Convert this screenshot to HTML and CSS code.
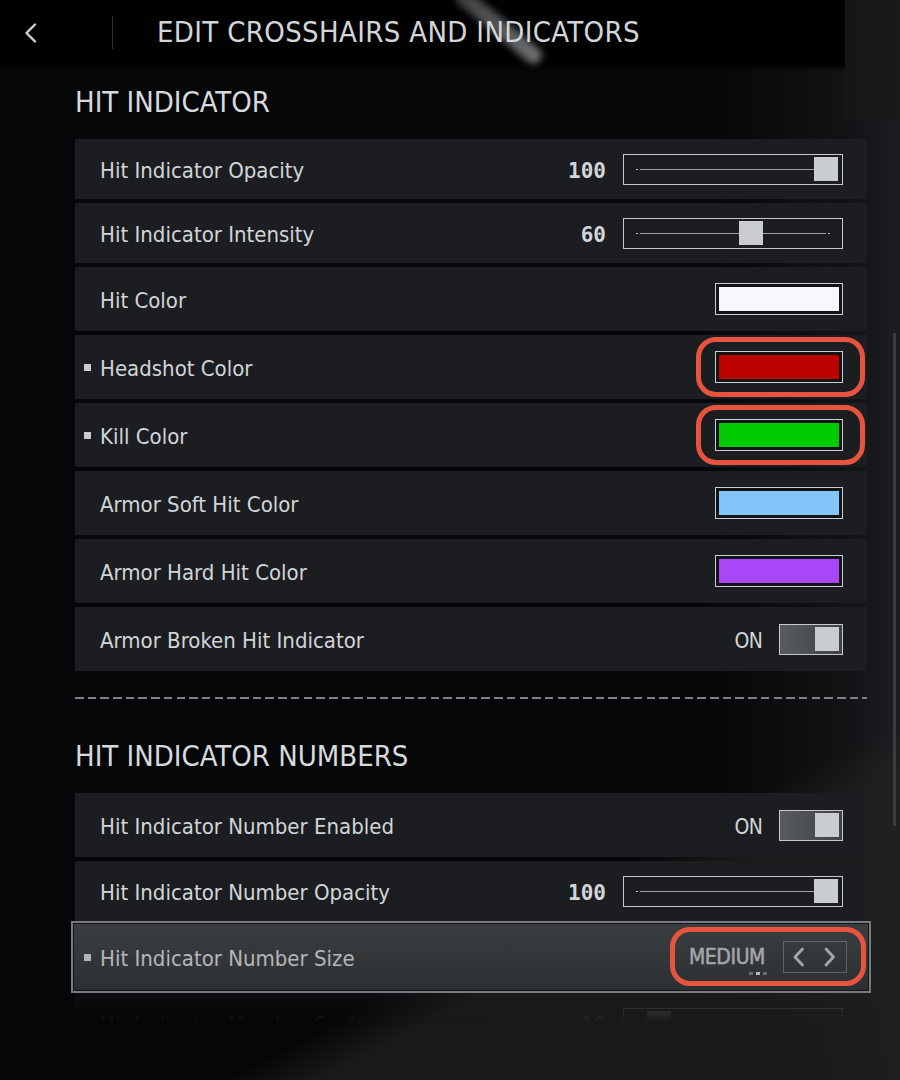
FILE: index.html
```html
<!DOCTYPE html>
<html lang="en">
<head>
<meta charset="utf-8">
<title>Edit Crosshairs and Indicators</title>
<link rel="stylesheet" href="styles.css">
</head>
<body>
<div class="scene"><div class="streak"></div><div class="rubble"></div></div>

<header class="topbar">
  <svg class="back" width="14" height="20" viewBox="0 0 14 20"><polyline points="11,1.5 2.5,10 11,18.5" fill="none" stroke="#cfd2d5" stroke-width="2.4" stroke-linecap="round" stroke-linejoin="round"/></svg>
  <span class="vsep"></span>
  <h1 class="title">EDIT CROSSHAIRS AND INDICATORS</h1>
</header>

<main class="content">
  <h2 class="section-title">HIT INDICATOR</h2>
  <div class="list">
    <div class="row short">
      <span class="mark"></span><span class="label">Hit Indicator Opacity</span>
      <div class="ctrl"><span class="value">100</span><div class="slider"><span class="track"></span><span class="thumb" style="left:190px"></span></div></div>
    </div>
    <div class="row short">
      <span class="mark"></span><span class="label">Hit Indicator Intensity</span>
      <div class="ctrl"><span class="value">60</span><div class="slider"><span class="track"></span><span class="thumb" style="left:115px"></span></div></div>
    </div>
    <div class="row">
      <span class="mark"></span><span class="label">Hit Color</span>
      <div class="ctrl"><div class="swatch"><span class="fill c-white"></span></div></div>
    </div>
    <div class="row">
      <span class="mark on"></span><span class="label">Headshot Color</span>
      <div class="ctrl"><div class="swatch"><span class="fill c-red"></span><span class="ring"></span></div></div>
    </div>
    <div class="row">
      <span class="mark on"></span><span class="label">Kill Color</span>
      <div class="ctrl"><div class="swatch"><span class="fill c-green"></span><span class="ring"></span></div></div>
    </div>
    <div class="row">
      <span class="mark"></span><span class="label">Armor Soft Hit Color</span>
      <div class="ctrl"><div class="swatch"><span class="fill c-blue"></span></div></div>
    </div>
    <div class="row">
      <span class="mark"></span><span class="label">Armor Hard Hit Color</span>
      <div class="ctrl"><div class="swatch"><span class="fill c-purple"></span></div></div>
    </div>
    <div class="row">
      <span class="mark"></span><span class="label">Armor Broken Hit Indicator</span>
      <div class="ctrl"><span class="state">ON</span><div class="toggle"><span class="knob"></span></div></div>
    </div>
  </div>

  <div class="dashes"></div>

  <h2 class="section-title second">HIT INDICATOR NUMBERS</h2>
  <div class="list">
    <div class="row">
      <span class="mark"></span><span class="label">Hit Indicator Number Enabled</span>
      <div class="ctrl"><span class="state">ON</span><div class="toggle"><span class="knob"></span></div></div>
    </div>
    <div class="row short">
      <span class="mark"></span><span class="label">Hit Indicator Number Opacity</span>
      <div class="ctrl"><span class="value">100</span><div class="slider"><span class="track"></span><span class="thumb" style="left:190px"></span></div></div>
    </div>
    <div class="row selected">
      <span class="mark on"></span><span class="label">Hit Indicator Number Size</span>
      <div class="cycle">
        <span class="cycle-value">MEDIUM<span class="dots"><i></i><i class="cur"></i><i></i></span></span>
        <div class="arrows"><svg width="62" height="30" viewBox="0 0 62 30"><polyline points="18.5,7 11,15 18.5,23" fill="none" stroke="#a3a7ab" stroke-width="2.8" stroke-linecap="round" stroke-linejoin="round"/><polyline points="42,7 49.5,15 42,23" fill="none" stroke="#a3a7ab" stroke-width="2.8" stroke-linecap="round" stroke-linejoin="round"/></svg></div>
        <span class="ring ring-cycle"></span>
      </div>
    </div>
    <div class="row short faded">
      <span class="mark"></span><span class="label">Hit Indicator Number Scale</span>
      <div class="ctrl"><span class="value">10</span><div class="slider"><span class="track"></span><span class="thumb" style="left:23px"></span></div></div>
    </div>
  </div>
</main>

<div class="scrollbar"></div>
</body>
</html>
```

FILE: styles.css
```css
* { box-sizing: border-box; margin: 0; padding: 0; }

html, body { width: 900px; height: 1080px; }

body {
  position: relative;
  overflow: hidden;
  background: #060708;
  color: #d4d7da;
  font-family: "DejaVu Sans Condensed", "DejaVu Sans", sans-serif;
  font-stretch: semi-condensed;
}

/* background scene */
.scene {
  position: absolute;
  inset: 0;
  z-index: -1;
  overflow: hidden;
  background:
    linear-gradient(90deg, rgba(0,0,0,0) 0, rgba(0,0,0,0) 700px, rgba(28,30,33,.55) 850px, rgba(30,32,35,.9) 900px),
    #050607;
}
.scene::before {
  content: "";
  position: absolute;
  left: 0; top: 0; width: 900px; height: 120px;
  background:
    linear-gradient(180deg, #010102 0, #010102 64px, rgba(1,1,2,0) 72px),
    linear-gradient(90deg, rgba(0,0,0,0) 0, rgba(0,0,0,0) 840px, #141618 848px, #17191b 900px);
  background-repeat: no-repeat;
  background-size: 845px 120px, 900px 120px;
}
.streak {
  position: absolute;
  left: 490px; top: -28px;
  width: 17px; height: 108px;
  border-radius: 9px;
  background: linear-gradient(180deg, #4a4c4e, #8a8c8e);
  transform: rotate(-50deg);
  filter: blur(3.5px);
  opacity: .8;
}
.rubble {
  position: absolute;
  left: 0; top: 700px; width: 900px; height: 380px;
  background: linear-gradient(152deg, rgba(0,0,0,0) 0, rgba(0,0,0,0) 58%, rgba(36,35,34,.65) 64%, rgba(30,30,30,.8) 100%);
}

/* header */
.topbar {
  height: 65px;
  display: flex;
  align-items: center;
  padding-left: 24px;
}
.back { display: block; margin-right: 74px; }
.vsep { width: 1px; height: 33px; background: #2e3032; }
.title {
  margin-left: 44px;
  font-size: 29px;
  line-height: 29px;
  font-weight: normal;
  letter-spacing: .35px;
  color: #d3d6d9;
}

/* content */
.content { margin-left: 75px; width: 792px; }

.section-title {
  margin-top: 23px;
  margin-bottom: 22px;
  font-size: 29px;
  line-height: 29px;
  height: 29px;
  font-weight: normal;
  color: #d7dadd;
}
.section-title.second { margin-top: 43px; margin-bottom: 22px; }

.list { display: flex; flex-direction: column; gap: 4px; }

.row {
  position: relative;
  height: 64px;
  display: flex;
  align-items: center;
  padding: 0 24px 0 9px;
  background: #1b1d20;
}
.row.short { height: 60px; }

.mark { flex: none; width: 16px; display: flex; align-items: center; }
.mark.on::before {
  content: "";
  width: 7px; height: 7px;
  background: #c9cdd1;
}

.label { flex: 1; font-size: 22px; line-height: 26px; padding-top: 4px; color: #d2d5d8; }

.ctrl { display: flex; align-items: center; gap: 17px; }

.value {
  font-family: "DejaVu Sans Mono", monospace;
  font-weight: bold;
  font-size: 21px;
  line-height: 26px;
  padding-top: 4px;
  color: #d2d6da;
}

.slider {
  position: relative;
  width: 220px;
  height: 31px;
  border: 1px solid #c6cacd;
}
.track {
  position: absolute;
  left: 12px; right: 12px; top: 14px;
  height: 1px;
  background: linear-gradient(90deg, #b9bdc1 0 2px, transparent 2px 4px, #9da1a5 4px calc(100% - 4px), transparent calc(100% - 4px) calc(100% - 2px), #b9bdc1 calc(100% - 2px));
}
.thumb {
  position: absolute;
  top: 2.5px;
  width: 24px; height: 24px;
  background: #c9cdd2;
}

.swatch {
  position: relative;
  width: 128px; height: 32px;
  border: 1px solid #c8cfd5;
  padding: 3px;
  background: #121416;
}
.fill { display: block; height: 100%; }
.c-white { background: #f6f8fb; }
.c-red { background: #bb0000; }
.c-green { background: #00cb00; }
.c-blue { background: #83c5f8; }
.c-purple { background: #a846f8; }

.ring {
  position: absolute;
  left: -20px; right: -23px; top: -15px; bottom: -15px;
  border: 5px solid #e6533f;
  border-radius: 20px;
  pointer-events: none;
}

.state { font-size: 21px; line-height: 26px; padding-top: 4px; letter-spacing: -.8px; color: #d2d6da; }

.toggle {
  width: 64px; height: 31px;
  border: 1px solid #c6cacd;
  background: linear-gradient(90deg, #575b5f, #3f4246);
  display: flex;
  justify-content: flex-end;
  align-items: center;
  padding-right: 3px;
}
.knob { width: 24px; height: 24px; background: #c9cdd2; }

.dashes {
  margin-top: 26px;
  height: 2px;
  background: repeating-linear-gradient(90deg, #7e8185 0 8.5px, transparent 8.5px 12.7px);
}

/* selected row */
.row.selected {
  height: 72px;
  margin: -4px -4px -4px;
  padding: 0 22px 0 11px;
  background: linear-gradient(180deg, #3b3e41 0, #34373a 50%, #2c2f32 100%);
  border: 2px solid #777b7f;
  box-shadow: inset 0 0 0 1px #141618;
}
.row.selected .label { color: #b3b7bb; }
.row.selected .mark.on::before { background: #b0b4b8; }

.cycle { position: relative; display: flex; align-items: center; gap: 18px; }
.cycle-value {
  position: relative;
  font-size: 21px;
  line-height: 24px;
  letter-spacing: -.4px;
  color: #a3a7ab;
  -webkit-text-stroke: .5px #a3a7ab;
}
.dots {
  position: absolute;
  right: -2px; bottom: -6px;
  display: flex;
  gap: 3px;
}
.dots i { display: block; width: 4px; height: 3px; background: #6a6e72; }
.dots i.cur { background: #b4b8bc; }

.arrows {
  width: 64px; height: 32px;
  border: 1px solid #5f6367;
}
.arrows svg { display: block; }

.ring-cycle { left: -19px; right: -19px; top: -14px; bottom: -13px; }

.row.faded {
  -webkit-mask-image: linear-gradient(180deg, rgba(0,0,0,.35) 0, rgba(0,0,0,.12) 16px, rgba(0,0,0,0) 30px);
  mask-image: linear-gradient(180deg, rgba(0,0,0,.35) 0, rgba(0,0,0,.12) 16px, rgba(0,0,0,0) 30px);
}

.scrollbar {
  position: absolute;
  left: 893px; top: 333px;
  width: 3px; height: 493px;
  background: #3a3d40;
}
```
